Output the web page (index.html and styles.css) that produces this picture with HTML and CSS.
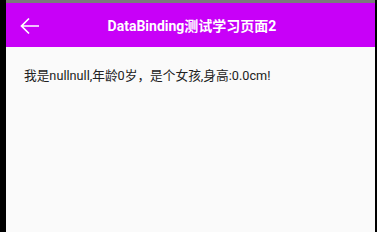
FILE: index.html
```html
<!DOCTYPE html>
<html lang="zh">
<head>
    <meta charset="UTF-8">
    <meta name="viewport" content="width=device-width, initial-scale=1.0">
    <title>DataBinding测试学习页面2</title>
    <link rel="stylesheet" href="styles.css">
</head>
<body>
    <div class="status-line"></div>
    <div class="screen">
        <div class="toolbar">
            <svg class="back-icon" width="24" height="24" viewBox="0 0 24 24">
                <path d="M21 12H3.5M11 4.5L3.5 12l7.5 7.5" fill="none" stroke="#fff" stroke-width="1.7"/>
            </svg>
            <div class="title">DataBinding测试学习页面2</div>
        </div>
        <div class="content">
            <p class="info">我是nullnull,年龄0岁，是个女孩,身高:0.0cm!</p>
        </div>
    </div>
</body>
</html>
```

FILE: styles.css
```css
html, body {
    margin: 0;
    height: 100%;
}
body {
    background-color: #000;
    font-family: Roboto, "Noto Sans CJK SC", sans-serif;
    display: flex;
    flex-direction: column;
    overflow: hidden;
}
.status-line {
    height: 3px;
    margin-left: 6px;
    width: 369px;
    background-color: #7a7a7a;
}
.screen {
    flex: 1;
    margin-left: 6px;
    width: 369px;
    background-color: #fafafa;
    display: flex;
    flex-direction: column;
}
.toolbar {
    height: 44px;
    background-color: #c800f8;
    display: flex;
    align-items: center;
    position: relative;
}
.back-icon {
    margin-left: 12px;
    margin-top: 2px;
}
.title {
    position: absolute;
    left: 0;
    right: 0;
    text-align: center;
    color: #fff;
    font-weight: bold;
    font-size: 14px;
    padding-left: 3px;
}
.content {
    padding: 18px 18px;
}
.info {
    margin: 0;
    font-size: 12.7px;
    color: #222;
}
```
